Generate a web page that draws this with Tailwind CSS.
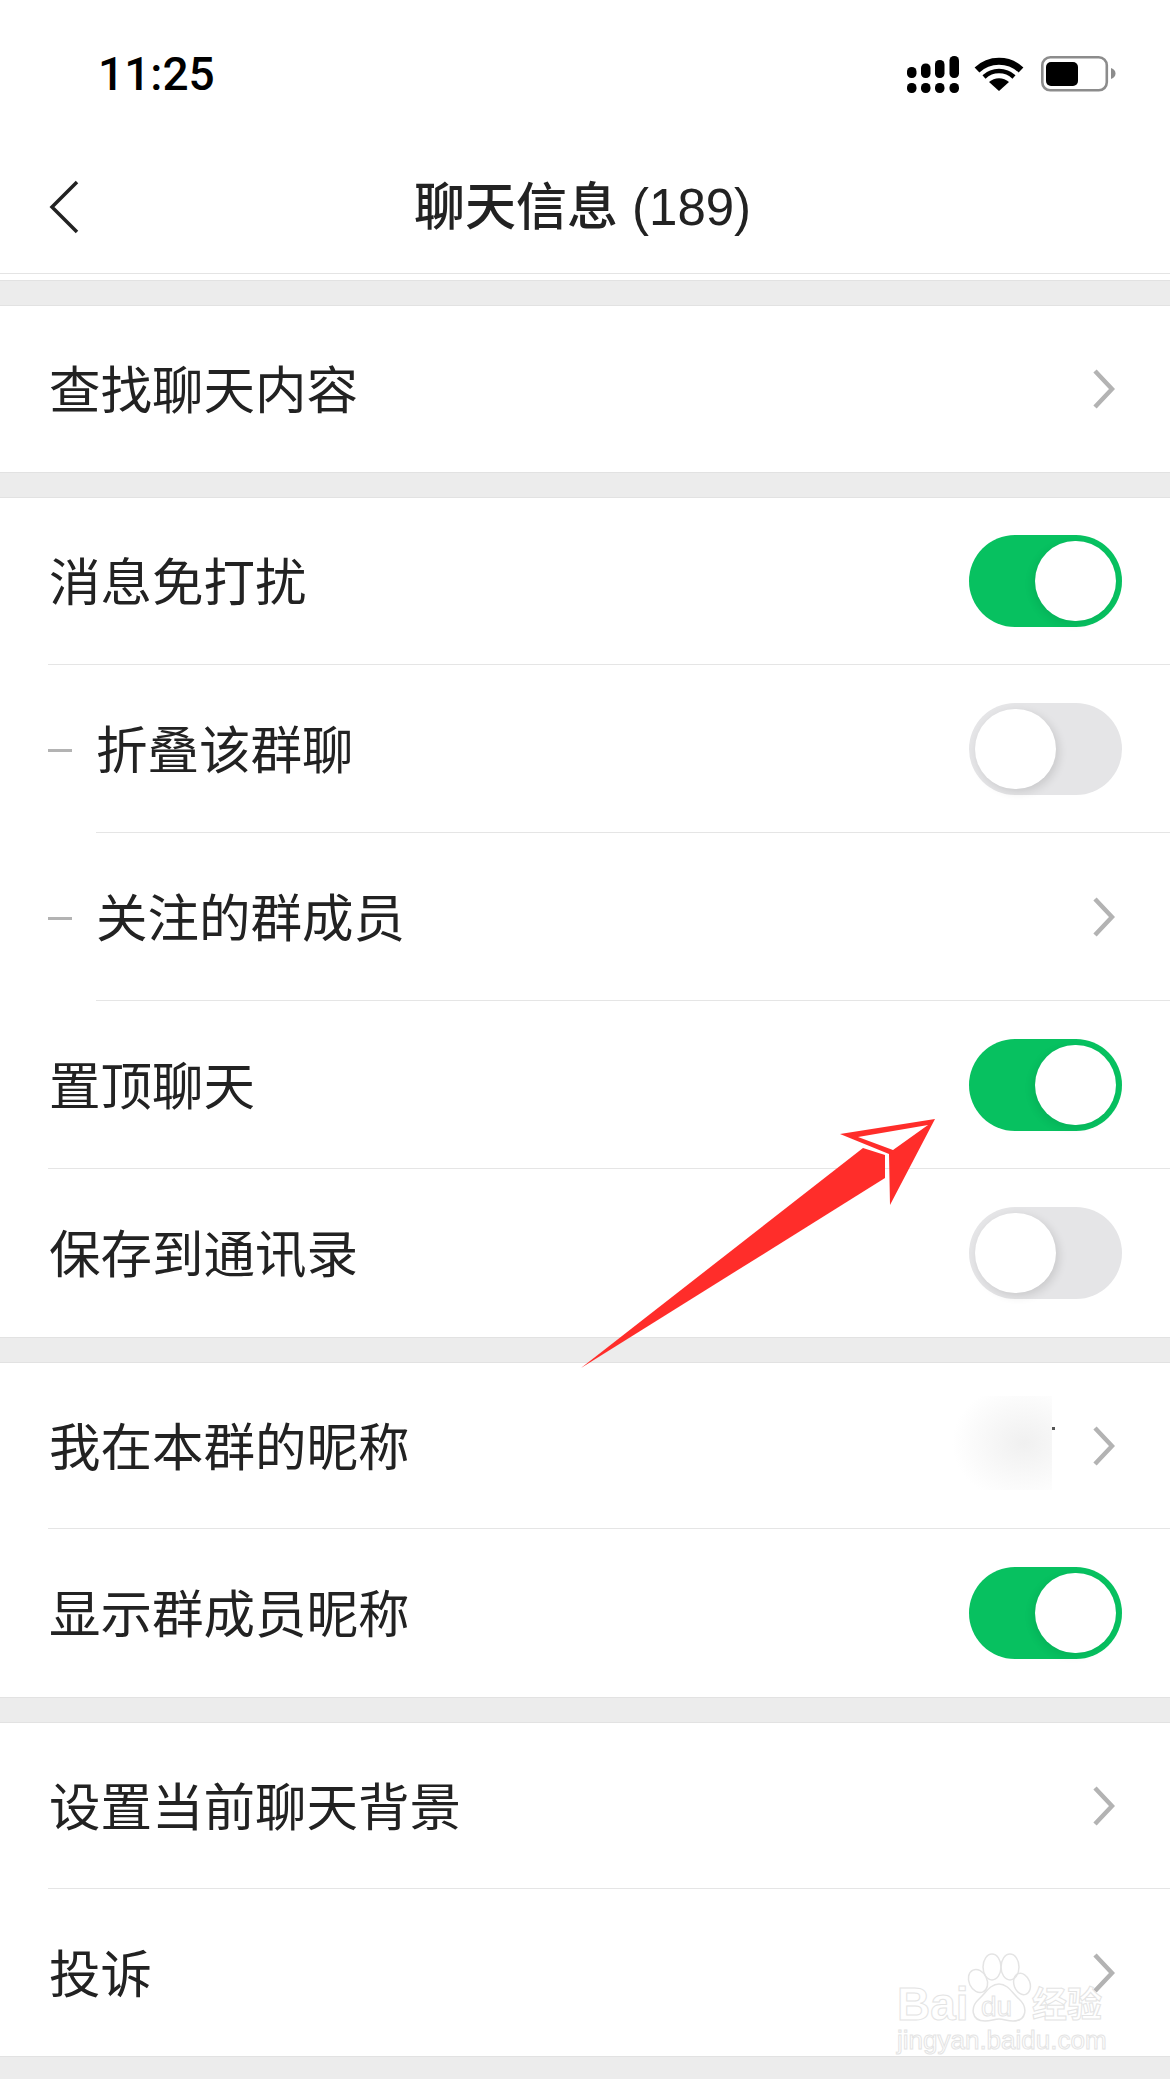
<!DOCTYPE html>
<html lang="zh-CN">
<head>
  <meta charset="UTF-8" />
  <title>聊天信息</title>
  <meta name="viewport" content="width=device-width, initial-scale=1.0" />
  <script src="https://cdn.jsdelivr.net/npm/@tailwindcss/browser@4"></script>
</head>
<body class="bg-white">
  <div class="relative w-[1170px] h-[2079px] overflow-hidden bg-white text-[#222222] font-['Liberation_Sans','Noto_Sans_CJK_SC',sans-serif]">

    <!-- status bar -->
    <div class="h-[130px] relative">
      <span class="absolute left-[98px] top-[46px] text-[46px] leading-[56px] font-medium text-black font-['Roboto',sans-serif]">11:25</span>
      <svg class="absolute left-[900px] top-[50px]" width="220" height="50" viewBox="900 50 220 50">
        <g fill="#000">
          <rect x="907" y="67" width="9.5" height="11" rx="4.5" />
          <rect x="921" y="63.5" width="9.5" height="14.5" rx="4.5" />
          <rect x="935" y="60" width="9.5" height="18" rx="4.5" />
          <rect x="949.500" y="56" width="9.500" height="22" rx="4.500" />
          <rect x="907" y="83" width="9.5" height="10" rx="4.5" />
          <rect x="921" y="83" width="9.5" height="10" rx="4.5" />
          <rect x="935" y="83" width="9.5" height="10" rx="4.5" />
          <rect x="949.500" y="83" width="9.500" height="10" rx="4.500" />
          <path d="M999 91l-10-9a15 15 0 0 1 20 0z" />
        </g>
        <g fill="none" stroke="#000">
          <path d="M977 70a32 32 0 0 1 44 0" stroke-width="7" />
          <path d="M984 77a22 22 0 0 1 30 0" stroke-width="4.500" />
        </g>
        <rect x="1042.300" y="57.300" width="64.500" height="33" rx="8" fill="none" stroke="#8c8c8c" stroke-width="2.600" />
        <rect x="1046" y="62" width="32" height="24" rx="5" fill="#000" />
        <path d="M1111 68c3 1 4.500 3 4.500 5.500s-1.500 4.500-4.500 5.500z" fill="#8c8c8c" />
      </svg>
    </div>

    <!-- nav bar -->
    <div class="h-[144px] border-b border-[#e4e4e4] relative flex items-center justify-center">
      <svg class="absolute left-[48px] top-[50px]" width="32" height="54" viewBox="0 0 32 54" fill="none" stroke="#222" stroke-width="3.500">
        <path d="M29 2 4 27l25 25" />
      </svg>
      <span class="text-[51px] leading-[60px] font-medium mt-[13px] ml-[-5px]">聊天信息 (189)</span>
    </div>
    <div class="h-[6px]"></div>

    <div class="h-[26px] bg-[#ececec] border-y border-[#e2e2e2]"></div>

    <div class="h-[166px] flex items-center pl-[49px] pr-[55px]">
      <span class="text-[51.5px] flex-1 mt-[6px]">查找聊天内容</span>
      <svg width="22" height="40" viewBox="0 0 22 40" fill="none" stroke="#b3b3b3" stroke-width="4.500"><path d="M2 2l17 18L2 38" /></svg>
    </div>

    <div class="h-[26px] bg-[#ececec] border-y border-[#e2e2e2]"></div>

    <!-- notifications group -->
    <div class="h-[167px] ml-[48px] border-b border-[#e5e5e5] flex items-center pl-[1px] pr-[48px]">
      <span class="text-[51.5px] flex-1 mt-[6px]">消息免打扰</span>
      <div class="w-[153px] h-[92px] rounded-[46px] bg-[#07c160] flex items-center justify-end pr-[6px]">
        <div class="w-[81px] h-[80px] rounded-full bg-white shadow-[-3px_3px_8px_rgba(0,0,0,0.08)]"></div>
      </div>
    </div>
    <div class="h-[168px] relative ml-[96px] border-b border-[#e5e5e5] flex items-center pr-[48px]">
      <div class="absolute left-[-48px] top-[84px] w-[24px] h-[3px] bg-[#b3b3b3]"></div>
      <span class="text-[51.5px] flex-1 mt-[6px]">折叠该群聊</span>
      <div class="w-[153px] h-[92px] rounded-[46px] bg-[#e5e5e7] flex items-center pl-[6px]">
        <div class="w-[81px] h-[80px] rounded-full bg-white shadow-[3px_3px_10px_rgba(0,0,0,0.12)]"></div>
      </div>
    </div>
    <div class="h-[168px] relative ml-[96px] border-b border-[#e5e5e5] flex items-center pr-[55px]">
      <div class="absolute left-[-48px] top-[84px] w-[24px] h-[3px] bg-[#b3b3b3]"></div>
      <span class="text-[51.5px] flex-1 mt-[6px]">关注的群成员</span>
      <svg width="22" height="40" viewBox="0 0 22 40" fill="none" stroke="#b3b3b3" stroke-width="4.500"><path d="M2 2l17 18L2 38" /></svg>
    </div>
    <div class="h-[168px] ml-[48px] border-b border-[#e5e5e5] flex items-center pl-[1px] pr-[48px]">
      <span class="text-[51.5px] flex-1 mt-[6px]">置顶聊天</span>
      <div class="w-[153px] h-[92px] rounded-[46px] bg-[#07c160] flex items-center justify-end pr-[6px]">
        <div class="w-[81px] h-[80px] rounded-full bg-white shadow-[-3px_3px_8px_rgba(0,0,0,0.08)]"></div>
      </div>
    </div>
    <div class="h-[168px] ml-[48px] flex items-center pl-[1px] pr-[48px]">
      <span class="text-[51.5px] flex-1 mt-[6px]">保存到通讯录</span>
      <div class="w-[153px] h-[92px] rounded-[46px] bg-[#e5e5e7] flex items-center pl-[6px]">
        <div class="w-[81px] h-[80px] rounded-full bg-white shadow-[3px_3px_10px_rgba(0,0,0,0.12)]"></div>
      </div>
    </div>

    <div class="h-[26px] bg-[#ececec] border-y border-[#e2e2e2]"></div>

    <!-- nickname group -->
    <div class="h-[166px] ml-[48px] border-b border-[#e5e5e5] flex items-center pl-[1px] pr-[55px]">
      <span class="text-[51.5px] flex-1 mt-[6px]">我在本群的昵称</span>
      <div class="relative w-[123px] h-[94px] mr-[41px] mb-[5px] bg-[radial-gradient(ellipse_72px_60px_at_95px_47px,#f0f0f0,#ffffff)]">
        <div class="absolute right-[-3px] top-[31px] w-[3px] h-[3px] bg-[#555555]"></div>
      </div>
      <svg width="22" height="40" viewBox="0 0 22 40" fill="none" stroke="#b3b3b3" stroke-width="4.500"><path d="M2 2l17 18L2 38" /></svg>
    </div>
    <div class="h-[168px] ml-[48px] flex items-center pl-[1px] pr-[48px]">
      <span class="text-[51.5px] flex-1 mt-[6px]">显示群成员昵称</span>
      <div class="w-[153px] h-[92px] rounded-[46px] bg-[#07c160] flex items-center justify-end pr-[6px]">
        <div class="w-[81px] h-[80px] rounded-full bg-white shadow-[-3px_3px_8px_rgba(0,0,0,0.08)]"></div>
      </div>
    </div>

    <div class="h-[26px] bg-[#ececec] border-y border-[#e2e2e2]"></div>

    <!-- background and report group -->
    <div class="h-[166px] ml-[48px] border-b border-[#e5e5e5] flex items-center pl-[1px] pr-[55px]">
      <span class="text-[51.5px] flex-1 mt-[6px]">设置当前聊天背景</span>
      <svg width="22" height="40" viewBox="0 0 22 40" fill="none" stroke="#b3b3b3" stroke-width="4.500"><path d="M2 2l17 18L2 38" /></svg>
    </div>
    <div class="h-[167px] ml-[48px] flex items-center pl-[1px] pr-[55px]">
      <span class="text-[51.5px] flex-1 mt-[6px]">投诉</span>
      <svg width="22" height="40" viewBox="0 0 22 40" fill="none" stroke="#b3b3b3" stroke-width="4.500"><path d="M2 2l17 18L2 38" /></svg>
    </div>

    <div class="h-[24px] bg-[#ececec] border-t border-[#e2e2e2]"></div>

    <!-- red annotation arrow -->
    <svg class="absolute left-0 top-0 pointer-events-none" width="1170" height="2079" viewBox="0 0 1170 2079">
      <path fill="#ff2d2a" d="M581 1368 863 1148l22 7v23z" />
      <path fill="#ff2d2a" fill-rule="evenodd" d="M935 1119 840 1134l49 20 1 51zM928 1125 858 1137l35 13z" />
    </svg>

    <!-- baidu watermark -->
    <div class="absolute left-[895px] top-[1950px] w-[215px] h-[106px] text-transparent [-webkit-text-stroke:1px_#e4e4e4]">
      <span class="absolute left-[2px] top-[29px] text-[46px] leading-[50px] font-bold">Bai</span>
      <svg class="absolute left-0 top-0" width="215" height="106" viewBox="895 1950 215 106" fill="none" stroke="#e4e4e4" stroke-width="1.500">
        <ellipse cx="978" cy="1981" rx="9" ry="12" transform="rotate(-25 978 1981)" />
        <ellipse cx="992" cy="1967" rx="9" ry="13" />
        <ellipse cx="1010" cy="1967" rx="9" ry="13" />
        <ellipse cx="1022" cy="1984" rx="8" ry="11" transform="rotate(-20 1022 1984)" />
        <path d="M999 1984c9 0 13 9 20 15 9 8 8 22-6 22-6 0-9-2-14-2s-8 2-14 2c-14 0-15-14-6-22 7-6 11-15 20-15z" />
      </svg>
      <span class="absolute left-[86px] top-[43px] text-[28px] leading-[28px]">du</span>
      <span class="absolute left-[137px] top-[31px] text-[35px] leading-[42px] font-bold font-['Noto_Sans_CJK_SC',sans-serif]">经验</span>
      <span class="absolute left-[2px] top-[74px] text-[26px] leading-[32px] whitespace-nowrap">jingyan.baidu.com</span>
    </div>
  </div>
</body>
</html>
